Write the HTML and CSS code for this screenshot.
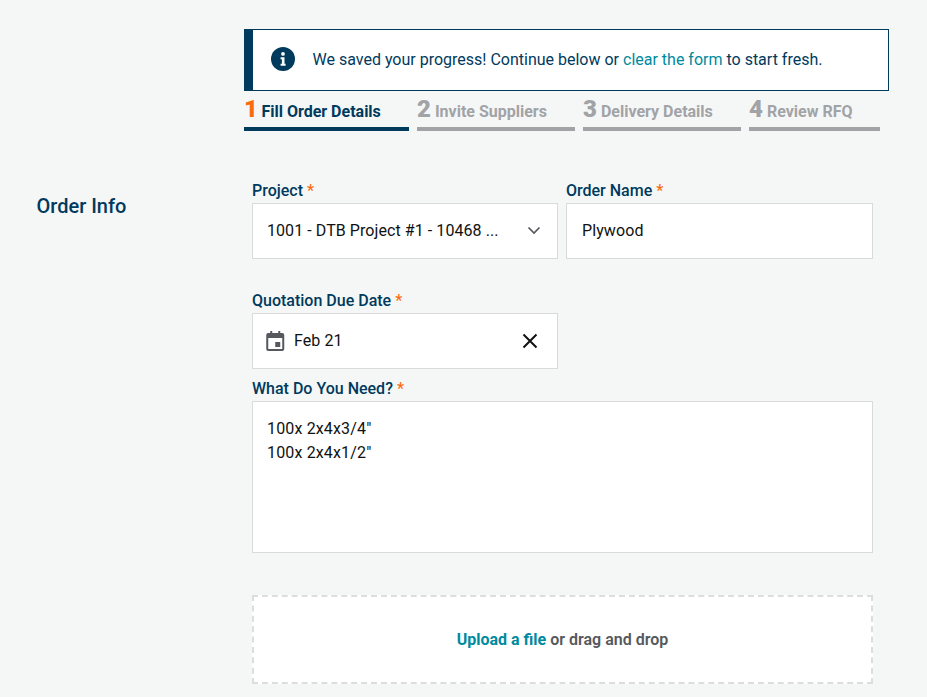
FILE: index.html
```html
<!DOCTYPE html>
<html lang="en">
<head>
<meta charset="utf-8">
<title>Order Info</title>
<link rel="stylesheet" href="styles.css">
</head>
<body>
<div class="page">
  <div class="top">
    <div class="alert">
      <svg class="info" viewBox="0 0 24 24" width="24" height="24"><circle cx="12" cy="12" r="12" fill="#003a5d"/><circle cx="12" cy="6.9" r="1.9" fill="#fff"/><path d="M9.6 10.2h3.9v6.6h1.1v2H9.6v-2h1.3v-4.6H9.6z" fill="#fff"/></svg>
      <span>We saved your progress! Continue below or <a class="link">clear the form</a> to start fresh.</span>
    </div>
    <div class="steps">
      <div class="step active s1"><b>1</b><span>Fill Order Details</span></div>
      <div class="step s2"><b>2</b><span>Invite Suppliers</span></div>
      <div class="step s3"><b>3</b><span>Delivery Details</span></div>
      <div class="step s4"><b>4</b><span>Review RFQ</span></div>
    </div>
  </div>
  <div class="section">
    <h2 class="section-title">Order Info</h2>
    <div class="form">
      <div class="row r1">
        <div class="field">
          <label>Project <i>*</i></label>
          <div class="box select"><span>1001 - DTB Project #1 - 10468 ...</span>
            <svg viewBox="0 0 14 9" width="14" height="9"><path d="M1.5 1.5 7 7l5.5-5.5" fill="none" stroke="#55585c" stroke-width="1.7"/></svg>
          </div>
        </div>
        <div class="field">
          <label>Order Name <i>*</i></label>
          <div class="box name">Plywood</div>
        </div>
      </div>
      <div class="row r2">
        <div class="field">
          <label>Quotation Due Date <i>*</i></label>
          <div class="box date">
            <svg class="cal" viewBox="0 0 18 20" width="18.5" height="20"><path fill="#55585c" d="M4 0h2v2h6V0h2v2h2a2 2 0 0 1 2 2v14a2 2 0 0 1-2 2H2a2 2 0 0 1-2-2V4a2 2 0 0 1 2-2h2zM2 7v11h14V7z"/><rect x="9" y="11" width="5" height="5" fill="#55585c"/></svg>
            <span>Feb 21</span>
            <svg class="x" viewBox="0 0 16 16" width="16" height="16"><path d="M1.5 1.5l13 13m0-13l-13 13" stroke="#111" stroke-width="2" fill="none"/></svg>
          </div>
        </div>
      </div>
      <div class="need">
        <label>What Do You Need? <i>*</i></label>
        <div class="box area">100x 2x4x3/4"<br>100x 2x4x1/2"</div>
      </div>
      <div class="drop"><a class="link strong">Upload a file</a>&nbsp;or drag and drop</div>
    </div>
  </div>
</div>
</body>
</html>
```

FILE: styles.css
```css
* { box-sizing: border-box; }
html, body { margin: 0; padding: 0; height: 697px; overflow: hidden; background: #f5f7f7; }
body { font-family: Roboto, sans-serif; font-size: 16px; color: #111; }
.page { padding-top: 29px; }
.top { margin-left: 244px; width: 645px; }
.alert { height: 62px; border: 1px solid #003a5d; border-left: 9px solid #003a5d; background: #fff; display: flex; align-items: center; padding: 0 0 2px 18px; color: #003a5d; }
.info { margin-right: 17.5px; flex: none; }
.link { color: #008a9e; }
.strong { font-weight: 700; }
.steps { display: flex; gap: 8px; }
.step { height: 40px; border-bottom: 4px solid #a2a3a6; color: #a2a3a6; font-weight: 700; display: flex; align-items: baseline; line-height: 36px; }
.step b { font-size: 24px; margin-right: 4px; }
.step.active { border-bottom-color: #003a5d; color: #003a5d; }
.step.active b { color: #fb6c10; }
.s1 { width: 165px; }
.s2, .s3 { width: 158px; }
.s4 { width: 131px; }
.s1 b { margin-right: 3.5px; }
.section { display: flex; margin-top: 50px; }
.section-title { margin: 13px 0 0 36.5px; width: 215.5px; font-size: 20px; line-height: 24px; font-weight: 500; color: #003a5d; }
.form { width: 621px; }
.row { display: flex; gap: 8px; }
.r2 { margin-top: 32px; }
.field { width: 306px; }
.field:nth-child(2) { width: 307px; }
label { display: block; height: 22px; line-height: 19px; font-weight: 500; color: #003a5d; }
label i { font-style: normal; color: #fb6c10; }
.box { background: #fff; border: 1px solid #d9dbdb; color: #111; letter-spacing: .1px; }
.select { letter-spacing: .07px; }
.area { letter-spacing: .15px; }
.select, .name, .date { height: 56px; display: flex; align-items: center; padding-bottom: 2px; }
.select { padding-left: 14px; padding-right: 16px; justify-content: space-between; }
.name { padding-left: 15px; }
.date { padding-left: 13px; padding-right: 19px; }
.cal { margin: 0 9.5px 0 0; position: relative; top: 1px; }
.x { margin-left: auto; position: relative; top: 1px; }
.need { margin-top: 10px; }
.need label { height: 22px; }
.area { height: 152px; padding: 15px 14px; line-height: 24px; }
.drop { margin-top: 42px; height: 89px; border: 2px dashed #dcdede; background: #fff; display: flex; align-items: center; justify-content: center; font-weight: 600; color: #55585c; }
```
